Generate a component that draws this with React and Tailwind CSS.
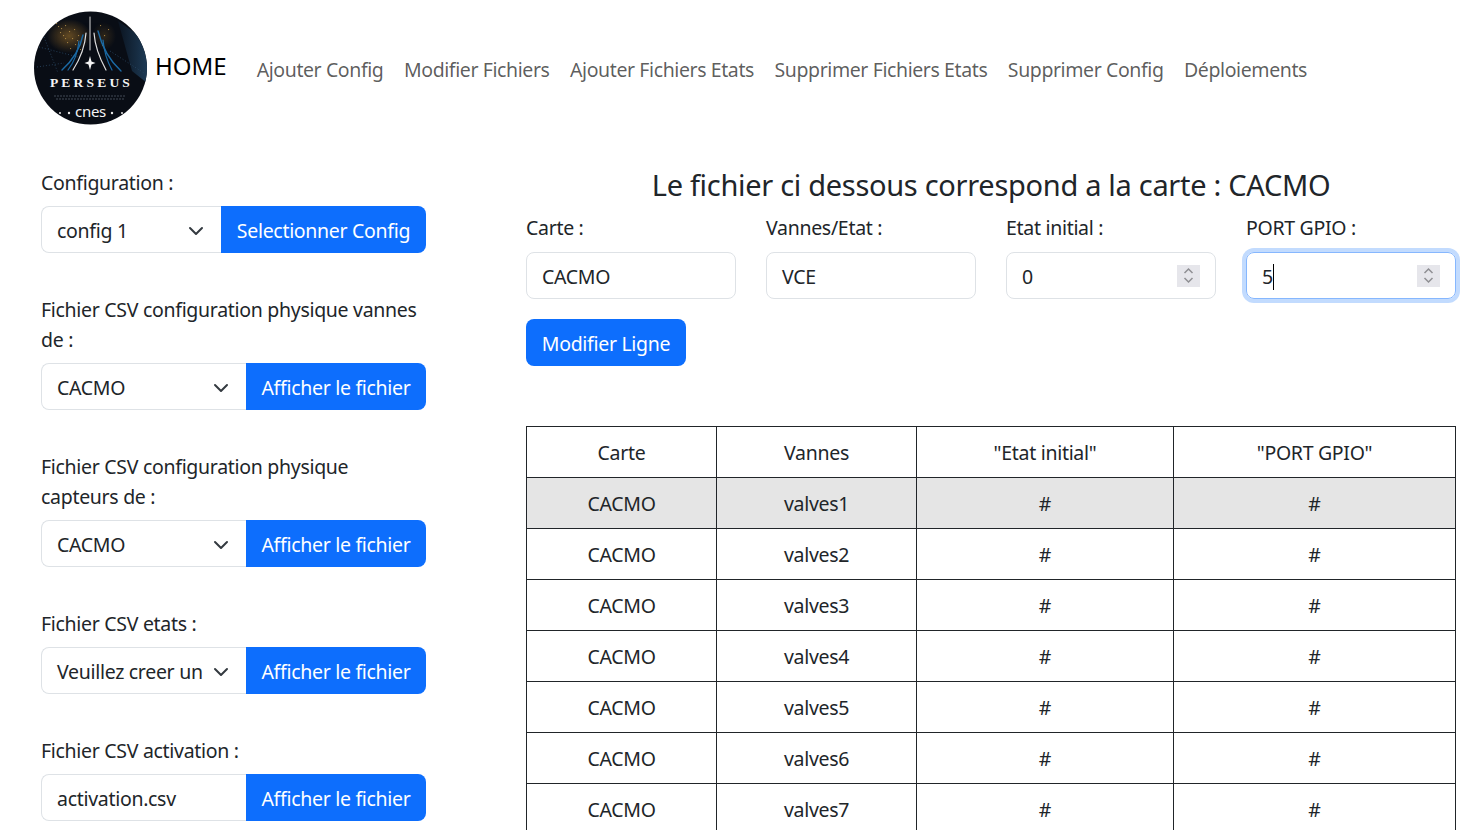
const navLinks = [
  "Ajouter Config",
  "Modifier Fichiers",
  "Ajouter Fichiers Etats",
  "Supprimer Fichiers Etats",
  "Supprimer Config",
  "Déploiements",
];

const leftGroups = [
  { label: "Configuration :", value: "config 1", button: "Selectionner Config", selectW: "w-[180px]", chevron: true },
  { label: "Fichier CSV configuration physique vannes de :", value: "CACMO", button: "Afficher le fichier", selectW: "w-[205px]", chevron: true },
  { label: "Fichier CSV configuration physique capteurs de :", value: "CACMO", button: "Afficher le fichier", selectW: "w-[205px]", chevron: true },
  { label: "Fichier CSV etats :", value: "Veuillez creer un", button: "Afficher le fichier", selectW: "w-[205px]", chevron: true },
  { label: "Fichier CSV activation :", value: "activation.csv", button: "Afficher le fichier", selectW: "w-[205px]", chevron: false },
];

const rows = ["valves1", "valves2", "valves3", "valves4", "valves5", "valves6", "valves7"];

// gold specks behind the rocket in the logo
const specks = [
  [22, 12], [27, 17], [31, 14], [35, 20], [29, 24], [38, 27], [33, 31], [41, 33], [36, 37], [44, 24],
  [26, 21], [40, 18], [46, 38], [31, 27], [66, 14], [70, 24], [74, 18], [68, 34], [24, 15], [43, 29],
];

const Logo = () => (
  <svg width="113" height="114" viewBox="0 0 113 114" className="shrink-0">
    <defs>
      <radialGradient id="glow" cx="50%" cy="50%" r="50%">
        <stop offset="0%" stopColor="#8a6428" stopOpacity="0.7" />
        <stop offset="100%" stopColor="#8a6428" stopOpacity="0" />
      </radialGradient>
      <linearGradient id="panel" x1="0" y1="0" x2="1" y2="0">
        <stop offset="0%" stopColor="#0b1420" />
        <stop offset="100%" stopColor="#1d3a55" />
      </linearGradient>
      <clipPath id="disc">
        <circle cx="56.5" cy="57" r="56.5" />
      </clipPath>
    </defs>
    <g clipPath="url(#disc)">
      <rect width="113" height="114" fill="#090d15" />
      <path d="M84 10 L113 30 L113 72 L98 60 Z" fill="url(#panel)" />
      <ellipse cx="35" cy="25" rx="22" ry="17" fill="url(#glow)" />
      <ellipse cx="70" cy="25" rx="12" ry="14" fill="url(#glow)" opacity="0.4" />
      <g fill="#c39a4c" opacity="0.75">
        {specks.map(([x, y]) => (
          <rect key={`${x}-${y}`} x={x} y={y} width="1.1" height="1.1" />
        ))}
      </g>
      <g fill="none" stroke="#2c4a66" strokeWidth="0.8" strokeDasharray="1 2">
        <path d="M5 36 L44 46" />
        <path d="M3 56 L30 52" />
        <path d="M10 26 L24 62" />
        <path d="M76 40 L110 62" />
      </g>
    </g>
    <g fill="none" strokeLinecap="round">
      <path d="M28 59 C38 50 46 38 49 24" stroke="#1b6aa5" strokeWidth="1.4" />
      <path d="M34 59 C41 50 44 40 45 30" stroke="#1b6aa5" strokeWidth="1.2" />
      <path d="M87 60 C76 50 68 36 64 20" stroke="#1b6aa5" strokeWidth="1.4" />
      <path d="M78 59 C73 50 70 40 69 29" stroke="#1b6aa5" strokeWidth="1.2" />
      <path d="M39 59 C46 48 51 36 52 22" stroke="#e0e0e0" strokeWidth="1.2" />
      <path d="M72 59 C66 48 61 36 60 22" stroke="#e0e0e0" strokeWidth="1.2" />
      <path d="M56 6 L56 39" stroke="#d8d8d8" strokeWidth="1" />
    </g>
    <path d="M56 45 L57.5 50.5 L61.5 52 L57.5 53.5 L56 59 L54.5 53.5 L50.5 52 L54.5 50.5 Z" fill="#f4f4f4" />
    <text x="57.5" y="76" textAnchor="middle" fill="#f4f4f4" fontSize="13.5" fontWeight="700" letterSpacing="3.2" fontFamily="'Liberation Serif', serif">PERSEUS</text>
    <g stroke="#5a6472" strokeWidth="1" strokeDasharray="2 1" opacity="0.7">
      <path d="M20 85 L92 85" />
      <path d="M22 88 L90 88" />
    </g>
    <g fill="#e8e8e8">
      <circle cx="26" cy="102" r="1" />
      <circle cx="35" cy="102" r="1.2" />
      <circle cx="78" cy="102" r="1.2" />
      <circle cx="88" cy="102" r="1" />
    </g>
    <text x="56.5" y="106" textAnchor="middle" fill="#f4f4f4" fontSize="15" letterSpacing="-0.3" fontFamily="'Noto Sans', sans-serif">cnes</text>
  </svg>
);

const Chevron = () => (
  <svg width="16" height="16" viewBox="0 0 16 16" fill="none" stroke="#343a40" strokeWidth="2" strokeLinecap="round" strokeLinejoin="round" className="shrink-0">
    <path d="m2 5 6 6 6-6" />
  </svg>
);

const Spinner = () => (
  <div className="flex h-[22px] w-[23px] shrink-0 items-center justify-center bg-[#e6e6eb]">
    <svg width="11" height="17" viewBox="0 0 11 17" fill="none" stroke="#8e8e93" strokeWidth="1.5">
      <path d="m1.5 6 4-4 4 4" />
      <path d="m1.5 11 4 4 4-4" />
    </svg>
  </div>
);

const InputGroup = ({ value, button, selectW, chevron }) => (
  <div className="flex h-[47px] w-[385px]">
    <div className={`${selectW} flex items-center justify-between rounded-l-lg border border-r-0 border-[#dee2e6] pl-[15px] pr-[17px] pt-[2px] text-[#212529]`}>
      <span className="whitespace-nowrap">{value}</span>
      {chevron && <Chevron />}
    </div>
    <button className="flex-1 whitespace-nowrap rounded-r-lg bg-[#0d6efd] pt-[2px] text-white">{button}</button>
  </div>
);

const Field = ({ label, value, spinner, focused }) => (
  <div className="w-[210px]">
    <div className="mb-[9px] h-[30px] leading-[30px] text-[#212529]">{label}</div>
    <div
      className={`flex h-[47px] items-center justify-between rounded-lg border pl-[15px] pr-[15px] text-[#212529] ${
        focused ? "border-[#86b7fe] shadow-[0_0_0_4px_#c2dbfe]" : "border-[#dee2e6]"
      }`}
    >
      <div className="flex items-center pt-[2px]">
        <span>{value}</span>
        {focused && <span className="h-[26px] w-px bg-black" />}
      </div>
      {spinner && <Spinner />}
    </div>
  </div>
);

const App = () => {
  return (
    <div className="h-[830px] w-full overflow-hidden bg-white text-[19.5px] leading-[30px] tracking-[-0.3px] text-[#212529] [font-family:'Noto_Sans',sans-serif]">
      <header className="flex h-[168px] items-start pl-[34px] pt-[11px]">
        <Logo />
        <a className="ml-[8px] mt-[36px] text-[24px] leading-[38px] tracking-normal text-black">HOME</a>
        <nav className="ml-[30px] mt-[44px] flex gap-[20.5px] tracking-[-0.4px] text-black/65">
          {navLinks.map((l) => (
            <a key={l} className="whitespace-nowrap">{l}</a>
          ))}
        </nav>
      </header>

      <main className="flex">
        <aside className="ml-[41px] w-[385px] shrink-0">
          {leftGroups.map((g) => (
            <div key={g.label} className="mb-[42px]">
              <label className="mb-[8px] block">{g.label}</label>
              <InputGroup value={g.value} button={g.button} selectW={g.selectW} chevron={g.chevron} />
            </div>
          ))}
        </aside>

        <section className="ml-[100px] w-[930px] shrink-0">
          <h2 className="-mt-[1px] h-[46px] text-center text-[29px] leading-[36px] tracking-[-0.3px]">Le fichier ci dessous correspond a la carte : CACMO</h2>
          <div className="flex gap-[30px]">
            <Field label="Carte :" value="CACMO" />
            <Field label="Vannes/Etat :" value="VCE" />
            <Field label="Etat initial :" value="0" spinner />
            <Field label="PORT GPIO :" value="5" spinner focused />
          </div>
          <button className="mt-[20px] h-[47px] w-[160px] rounded-lg bg-[#0d6efd] pt-[2px] text-white">Modifier Ligne</button>

          <table className="mt-[60px] w-[929px] table-fixed border-collapse">
            <colgroup>
              <col className="w-[190px]" />
              <col className="w-[200px]" />
              <col className="w-[257px]" />
              <col className="w-[282px]" />
            </colgroup>
            <thead>
              <tr className="h-[51px] text-center">
                <th className="border border-[#212529] pt-[2px] font-normal">Carte</th>
                <th className="border border-[#212529] pt-[2px] font-normal">Vannes</th>
                <th className="border border-[#212529] pt-[2px] font-normal">"Etat initial"</th>
                <th className="border border-[#212529] pt-[2px] font-normal">"PORT GPIO"</th>
              </tr>
            </thead>
            <tbody>
              {rows.map((r, i) => (
                <tr key={r} className={`h-[51px] text-center ${i === 0 ? "bg-[#e5e5e5]" : ""}`}>
                  <td className="border border-[#212529] pt-[2px]">CACMO</td>
                  <td className="border border-[#212529] pt-[2px]">{r}</td>
                  <td className="border border-[#212529] pt-[2px]">#</td>
                  <td className="border border-[#212529] pt-[2px]">#</td>
                </tr>
              ))}
            </tbody>
          </table>
        </section>
      </main>
    </div>
  );
};

export default App;
